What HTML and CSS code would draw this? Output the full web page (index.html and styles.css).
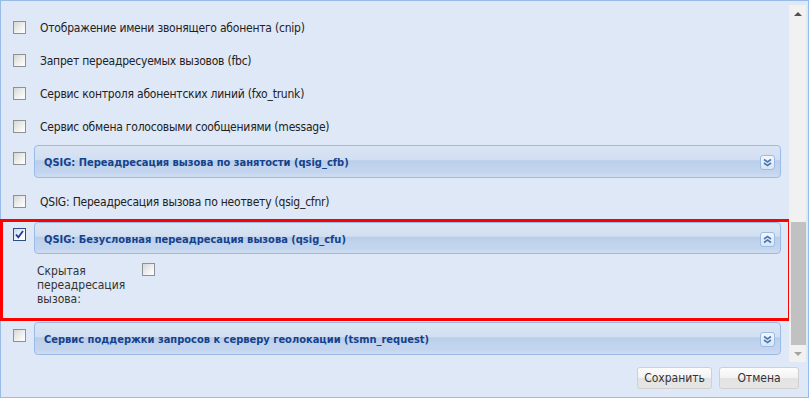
FILE: index.html
```html
<!DOCTYPE html>
<html lang="ru">
<head>
  <meta charset="UTF-8" />
  <title>Сервисы</title>
  <link rel="stylesheet" href="styles.css">
</head>
<body>
  <div class="window">
    <div class="main">
      <div class="list">
        <div class="row"><span class="cb"></span><span class="label">Отображение имени звонящего абонента (cnip)</span></div>
        <div class="row"><span class="cb"></span><span class="label">Запрет переадресуемых вызовов (fbc)</span></div>
        <div class="row"><span class="cb"></span><span class="label">Сервис контроля абонентских линий (fxo_trunk)</span></div>
        <div class="row"><span class="cb"></span><span class="label">Сервис обмена голосовыми сообщениями (message)</span></div>

        <div class="row group">
          <span class="cb"></span>
          <div class="panel">
            <span class="title">QSIG: Переадресация вызова по занятости (qsig_cfb)</span>
            <span class="tool">
              <svg width="9" height="9" viewBox="0 0 9 9"><path d="M1 1.5 L4.5 4 L8 1.5 M1 5 L4.5 7.5 L8 5" fill="none" stroke="#4c78b2" stroke-width="1.6"/></svg>
            </span>
          </div>
        </div>

        <div class="row after-group"><span class="cb"></span><span class="label">QSIG: Переадресация вызова по неответу (qsig_cfnr)</span></div>

        <div class="marked">
          <div class="row group">
            <span class="cb checked">
              <svg width="11" height="11" viewBox="0 0 11 11"><path d="M2 5.5 L4.3 8.3 L9 2" fill="none" stroke="#1a3a9c" stroke-width="1.8"/></svg>
            </span>
            <div class="panel">
              <span class="title">QSIG: Безусловная переадресация вызова (qsig_cfu)</span>
              <span class="tool">
                <svg width="9" height="9" viewBox="0 0 9 9"><path d="M1 4 L4.5 1.5 L8 4 M1 7.5 L4.5 5 L8 7.5" fill="none" stroke="#4c78b2" stroke-width="1.6"/></svg>
              </span>
            </div>
          </div>
          <div class="subfield">
            <span class="sublabel">Скрытая переадресация вызова:</span>
            <span class="cb"></span>
          </div>
        </div>

        <div class="row group last">
          <span class="cb"></span>
          <div class="panel">
            <span class="title">Сервис поддержки запросов к серверу геолокации (tsmn_request)</span>
            <span class="tool">
              <svg width="9" height="9" viewBox="0 0 9 9"><path d="M1 1.5 L4.5 4 L8 1.5 M1 5 L4.5 7.5 L8 5" fill="none" stroke="#4c78b2" stroke-width="1.6"/></svg>
            </span>
          </div>
        </div>
      </div>

      <div class="scrollbar">
        <div class="arrow up"></div>
        <div class="track"><div class="thumb"></div></div>
        <div class="arrow down"></div>
      </div>
    </div>

    <div class="footer">
      <button class="btn save">Сохранить</button>
      <button class="btn cancel">Отмена</button>
    </div>
  </div>
</body>
</html>
```

FILE: styles.css
```css
body {
  margin: 0;
  background: #fff;
  font-family: "DejaVu Sans Condensed", "DejaVu Sans", sans-serif;
  font-size: 12px;
  color: #222;
}
.window {
  width: 809px;
  height: 398px;
  box-sizing: border-box;
  border: 1px solid #99bbe8;
  background: #dfe8f6;
}
.main {
  display: flex;
  height: 360px;
}
.list {
  flex: 1;
  padding-top: 10px;
}
.row {
  display: flex;
  align-items: center;
  height: 33px;
  padding-left: 12px;
}
.cb {
  flex: none;
  width: 13px;
  height: 13px;
  box-sizing: border-box;
  border: 1px solid #8f9092;
  background: linear-gradient(135deg, #d6d6d6, #f2f2f2 60%, #fff);
  display: flex;
  align-items: center;
  justify-content: center;
}
.cb.checked {
  border-color: #2a4f87;
  background: linear-gradient(135deg, #c9d6e6, #f4f7fb 60%, #fff);
}
.label {
  margin-left: 14px;
  letter-spacing: -0.22px;
}
.row.group {
  align-items: flex-start;
  margin-top: 2px;
}
.row.group .cb {
  margin-top: 7px;
}
.panel {
  flex: 1;
  height: 33px;
  box-sizing: border-box;
  margin: 0 8px;
  padding: 2px 5px 0 9px;
  display: flex;
  align-items: center;
  justify-content: space-between;
  border: 1px solid #99bbe8;
  border-radius: 4px;
  background: linear-gradient(#dae6f5, #d2dff1 44%, #b9cde9 48%, #c0d3ed 62%, #c3d5ee 85%, #cfdcf0);
}
.title {
  font-size: 11px;
  font-weight: bold;
  color: #15428b;
}
.tool {
  width: 15px;
  height: 15px;
  box-sizing: border-box;
  border: 1px solid #99bbe8;
  border-radius: 3px;
  background: linear-gradient(#f3f7fc, #d9e5f4);
  display: flex;
  align-items: center;
  justify-content: center;
}
.row.after-group {
  margin-top: 7px;
}
.marked {
  margin: 1px -2px 0 -1px;
  border: 3px solid #f00;
}
.marked .row.group {
  margin-top: 0;
  padding-left: 10px;
  height: 32px;
}
.marked .row.group .cb {
  margin-top: 6px;
}
.marked .panel {
  height: 32px;
  margin-right: 7px;
}
.subfield {
  display: flex;
  align-items: flex-start;
  height: 64px;
  box-sizing: border-box;
  padding: 9px 0 0 34px;
}
.sublabel {
  width: 105px;
  line-height: 14px;
  margin-top: 1px;
  font-size: 12px;
  color: #333;
}
.row.group.last {
  margin-top: 1px;
}
.scrollbar {
  width: 17px;
  height: 357px;
  margin: 4px 2px 0 0;
  background: #f1f1f1;
  display: flex;
  flex-direction: column;
}
.arrow {
  height: 17px;
  display: flex;
  align-items: center;
  justify-content: center;
}
.arrow::before {
  content: "";
  border-left: 4px solid transparent;
  border-right: 4px solid transparent;
}
.arrow.up::before {
  border-bottom: 4px solid #505050;
}
.arrow.down::before {
  border-top: 4px solid #a3a3a3;
}
.track {
  flex: 1;
}
.thumb {
  margin: 200px 0 0 2px;
  height: 123px;
  background: #c1c1c1;
}
.footer {
  display: flex;
  justify-content: flex-end;
  gap: 7px;
  padding: 6px 9px 0 0;
}
.btn {
  height: 22px;
  padding: 0;
  border: 1px solid #d0d0d0;
  border-radius: 3px;
  background: linear-gradient(#fdfdfd, #f2f2f2 50%, #e3e3e3 52%, #e6e6e6);
  font-family: "DejaVu Sans Condensed", "DejaVu Sans", sans-serif;
  font-size: 12px;
  color: #333;
}
.btn.save {
  width: 75px;
}
.btn.cancel {
  width: 80px;
}
```
